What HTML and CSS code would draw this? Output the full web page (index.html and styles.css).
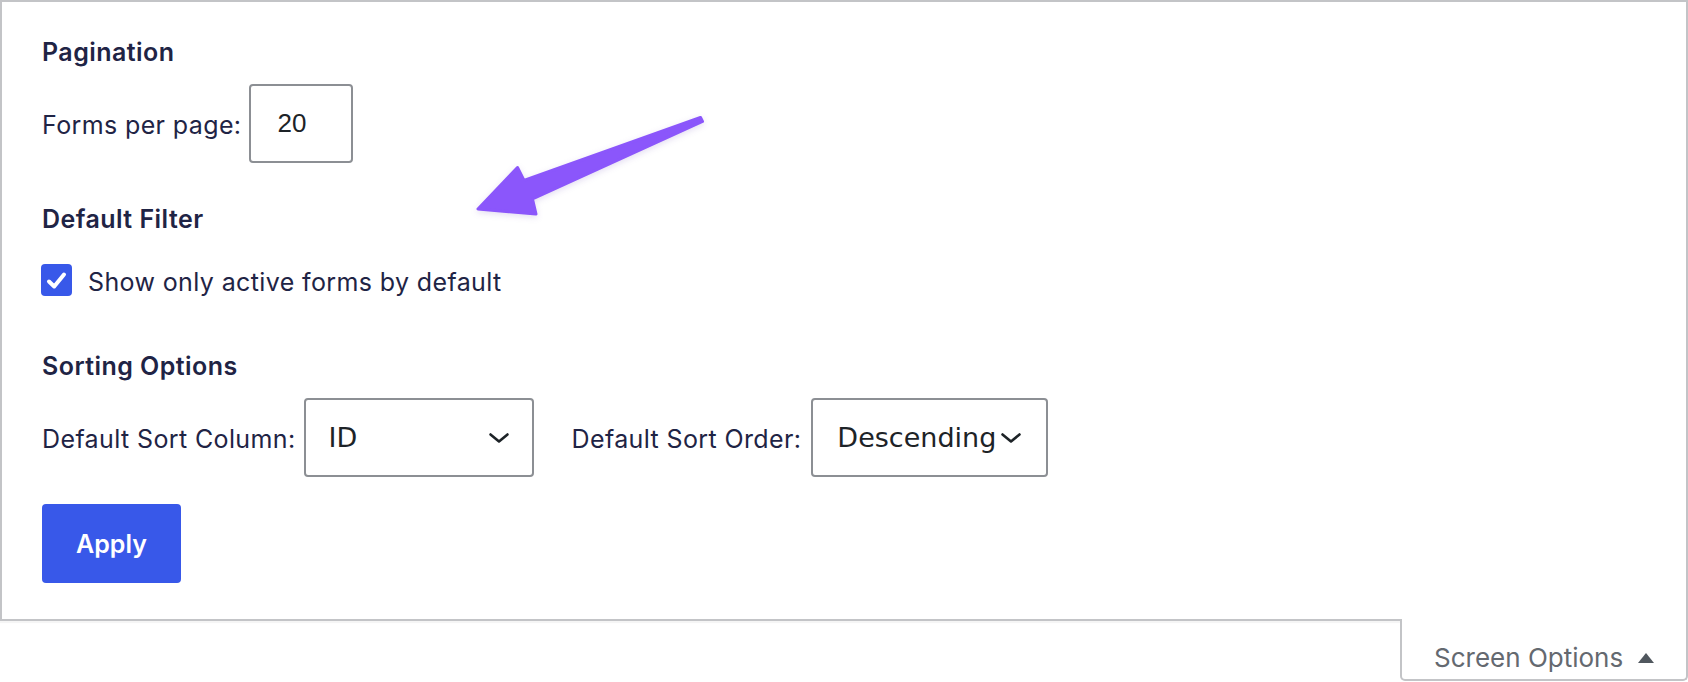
FILE: index.html
```html
<!DOCTYPE html>
<html lang="en">
<head>
<meta charset="utf-8">
<title>Screen Options</title>
<link rel="stylesheet" href="styles.css">
</head>
<body>
<div class="page">
  <div class="panel">
    <section class="group">
      <h3 class="group-title">Pagination</h3>
      <div class="row">
        <label class="label" for="per-page">Forms per page:</label>
        <input class="num-input" id="per-page" type="text" value="20">
      </div>
    </section>

    <section class="group group-filter">
      <h3 class="group-title title-filter">Default Filter</h3>
      <div class="check-row">
        <span class="checkbox">
          <svg viewBox="0 0 31 31" width="31" height="31"><path d="M8 16.5 L13.2 21.5 L23 9.5" fill="none" stroke="#fff" stroke-width="4" stroke-linecap="round" stroke-linejoin="round"/></svg>
        </span>
        <span class="check-label">Show only active forms by default</span>
      </div>
    </section>

    <section class="group group-sort">
      <h3 class="group-title">Sorting Options</h3>
      <div class="row">
        <span class="label">Default Sort Column:</span>
        <div class="select select-col">
          <span class="select-text">ID</span>
          <svg class="chev" viewBox="0 0 22 12" width="22" height="12"><path d="M2.5 2.5 L11 9.5 L19.5 2.5" fill="none" stroke="#1d2327" stroke-width="2.6" stroke-linecap="round" stroke-linejoin="round"/></svg>
        </div>
        <span class="label label-order">Default Sort Order:</span>
        <div class="select select-order">
          <span class="select-text">Descending</span>
          <svg class="chev" viewBox="0 0 22 12" width="22" height="12"><path d="M2.5 2.5 L11 9.5 L19.5 2.5" fill="none" stroke="#1d2327" stroke-width="2.6" stroke-linecap="round" stroke-linejoin="round"/></svg>
        </div>
      </div>
    </section>

    <button class="apply" type="button">Apply</button>
  </div>

  <div class="tab-wrap">
    <button class="tab" type="button">Screen Options <span class="tri"></span></button>
  </div>

  <svg class="arrow" viewBox="0 0 260 130" width="260" height="130">
    <path d="M240.5 17.5 L64 80.5 L57.5 67.5 L18 109 L76 114 L72.5 99 L242.5 21.5 Z" fill="#8b56fb" stroke="#8b56fb" stroke-width="3" stroke-linejoin="round"/>
  </svg>
</div>
</body>
</html>
```

FILE: styles.css
```css
* {
  box-sizing: border-box;
}

html, body {
  margin: 0;
  padding: 0;
  background: #ffffff;
}

body {
  font-family: Inter, "Noto Sans", "Liberation Sans", sans-serif;
  color: #1f2445;
}

.page {
  position: relative;
  width: 1688px;
}

.panel {
  border: 2px solid #c3c4c7;
  padding: 35px 40px 36px 40px;
  background: #fff;
  box-shadow: 0 2px 1px rgba(0, 0, 0, 0.04);
}

.group-title {
  margin: 0 0 17px 0;
  font-size: 25px;
  line-height: 30px;
  font-weight: 600;
  letter-spacing: 0.45px;
  color: #1f2445;
}

.title-filter {
  margin-bottom: 30px;
}

.group-filter {
  margin-top: 41px;
}

.group-sort {
  margin-top: 51px;
}

.row {
  display: flex;
  align-items: center;
}

.label {
  font-size: 25px;
  line-height: 30px;
  letter-spacing: 0.38px;
  margin-right: 8px;
  padding-top: 2px;
}

.label-order {
  margin-left: 38px;
  margin-right: 10px;
}

.num-input {
  width: 104px;
  height: 79px;
  border: 2px solid #8c8f94;
  border-radius: 4px;
  padding: 0 0 0 26px;
  font-family: "Liberation Sans", Arial, sans-serif;
  font-size: 26px;
  color: #1d2327;
  background: #fff;
  outline: none;
}

.check-row {
  display: flex;
  align-items: flex-start;
}

.checkbox {
  width: 31px;
  height: 32px;
  border-radius: 4px;
  background: #3858e9;
  display: flex;
  align-items: center;
  justify-content: center;
  margin-left: -1px;
  flex: none;
}

.checkbox svg {
  display: block;
}

.check-label {
  font-size: 25px;
  line-height: 36px;
  letter-spacing: 0.38px;
  margin-left: 16px;
}

.select {
  height: 79px;
  border: 2px solid #8c8f94;
  border-radius: 4px;
  display: flex;
  align-items: center;
  justify-content: space-between;
  font-family: "DejaVu Sans", Verdana, sans-serif;
  font-size: 27px;
  color: #1d2327;
  background: #fff;
}

.select-col {
  width: 230px;
  padding: 0 22px 0 23px;
}

.select-order {
  width: 237px;
  padding: 0 21px 0 24px;
  justify-content: flex-start;
}

.select-order .chev {
  margin-left: 4px;
}

.select-text {
  line-height: 1;
}

.chev {
  display: block;
  flex: none;
}

.apply {
  margin-top: 27px;
  height: 79px;
  width: 139px;
  border: none;
  border-radius: 4px;
  background: #3858e9;
  color: #fff;
  font-family: Inter, "Noto Sans", sans-serif;
  font-size: 25px;
  font-weight: 600;
  display: flex;
  align-items: center;
  justify-content: center;
  padding: 0;
}

.tab-wrap {
  display: flex;
  justify-content: flex-end;
}

.tab {
  margin-top: -2px;
  width: 288px;
  height: 62px;
  border: 2px solid #c3c4c7;
  border-top: none;
  border-radius: 0 0 5px 5px;
  background: #fff;
  padding: 24px 30px 0 32px;
  display: flex;
  align-items: flex-start;
  font-family: Inter, "Noto Sans", sans-serif;
  font-size: 26px;
  line-height: 30px;
  color: #646970;
  position: relative;
  z-index: 1;
}

.tri {
  display: block;
  width: 0;
  height: 0;
  margin-left: 15px;
  margin-top: 10px;
  border-left: 8.5px solid transparent;
  border-right: 8.5px solid transparent;
  border-bottom: 10px solid #50575e;
}

.arrow {
  position: absolute;
  left: 460px;
  top: 100px;
  overflow: visible;
  filter: drop-shadow(0 2px 3px rgba(70, 30, 160, 0.15));
}
```
